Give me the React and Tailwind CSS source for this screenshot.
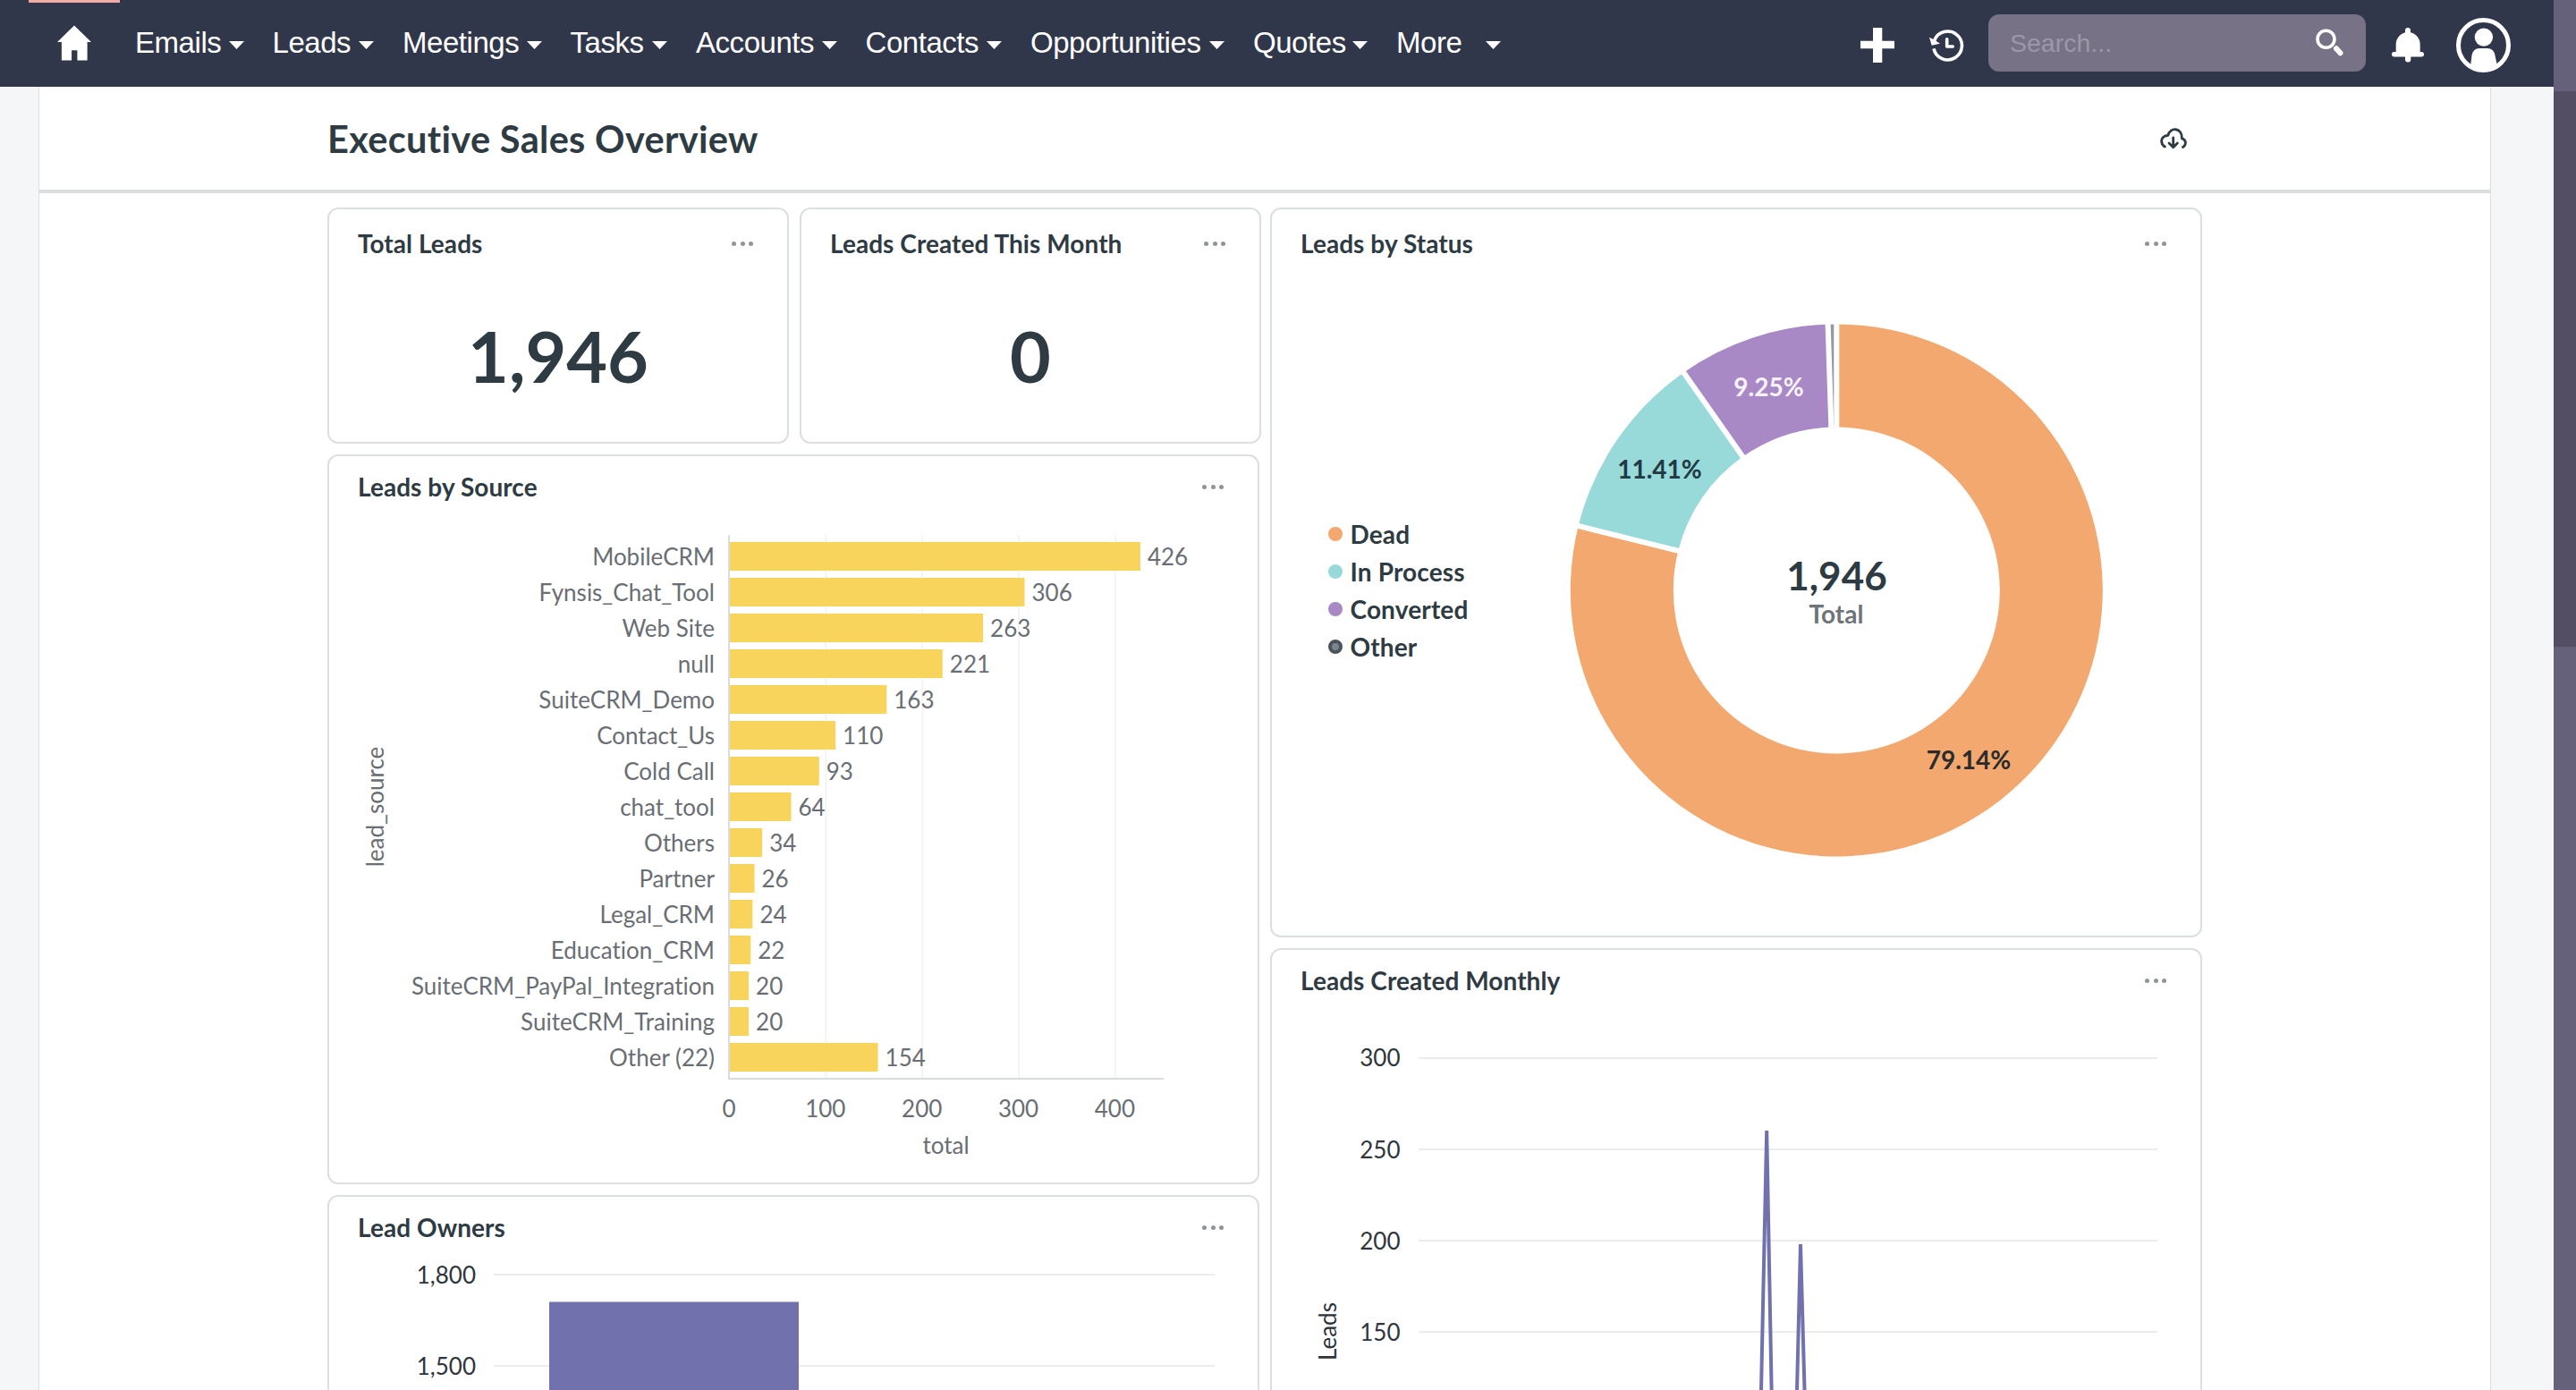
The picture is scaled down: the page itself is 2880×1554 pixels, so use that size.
import React from 'react';

const navItems = [
  { label: 'Emails', width: 'w-[104.5px]' },
  { label: 'Leads', width: 'w-[96.5px]' },
  { label: 'Meetings', width: 'w-[138.5px]' },
  { label: 'Tasks', width: 'w-[91.5px]' },
  { label: 'Accounts', width: 'w-[140.5px]' },
  { label: 'Contacts', width: 'w-[135.5px]' },
  { label: 'Opportunities', width: 'w-[200px]' },
  { label: 'Quotes', width: 'w-[111px]' },
  { label: 'More', width: 'w-[100px]' },
];

const sources = [
  { name: 'MobileCRM', total: 426 },
  { name: 'Fynsis_Chat_Tool', total: 306 },
  { name: 'Web Site', total: 263 },
  { name: 'null', total: 221 },
  { name: 'SuiteCRM_Demo', total: 163 },
  { name: 'Contact_Us', total: 110 },
  { name: 'Cold Call', total: 93 },
  { name: 'chat_tool', total: 64 },
  { name: 'Others', total: 34 },
  { name: 'Partner', total: 26 },
  { name: 'Legal_CRM', total: 24 },
  { name: 'Education_CRM', total: 22 },
  { name: 'SuiteCRM_PayPal_Integration', total: 20 },
  { name: 'SuiteCRM_Training', total: 20 },
  { name: 'Other (22)', total: 154 },
];

// angles in radians, clockwise from 12 o'clock
const slices = [
  { name: 'Dead', from: 0, to: 4.9567, color: '#f2a86f', label: '79.14%', x: 779, y: 550, ink: '#2b2b2b' },
  { name: 'In Process', from: 4.9567, to: 5.6713, color: '#98d9d9', label: '11.41%', x: 433.5, y: 225, ink: '#1f3a44' },
  { name: 'Converted', from: 5.6713, to: 6.2507, color: '#a989c5', label: '9.25%', x: 555.5, y: 133, ink: '#f7f2fb' },
  { name: 'Other', from: 6.2507, to: 6.2832, color: '#949aa0' },
];

const Caret = () => (
  <svg className="w-[17px] h-[9px] mt-1 shrink-0" viewBox="0 0 17 9" fill="#fff">
    <path d="M0 0h17L8.500 9z" />
  </svg>
);

const NavBar = () => (
  <header className="h-[97px] bg-[#31374a] flex items-center relative shrink-0">
    <span className="absolute left-8 top-0 w-[102px] h-[3px] bg-[#f5aaa5]" />
    <svg className="ml-16 w-[38px] h-[40px] -mt-0.5 shrink-0" viewBox="0 0 39 40" fill="#fff">
      <path d="M19.500 0L39 19h-4.500v21H23V28.500h-6.500V40H5V19H0z" />
    </svg>
    <nav className="ml-[49px] flex items-center gap-8 text-[33px] leading-[40px] tracking-[-0.45px] text-white">
      {navItems.map((item) => (
        <div key={item.label} className="flex items-center">
          <span className={`-mt-0.5 whitespace-nowrap ${item.width}`}>{item.label}</span>
          <Caret />
        </div>
      ))}
    </nav>
    <div className="ml-auto mr-12 flex items-center">
      <svg className="w-[38px] h-[39px] mt-1" viewBox="0 0 38 39" fill="#fff">
        <path d="M14 0h10.300v14.700H38v8.600H24.300V39H14V23.300H0v-8.600h14z" />
      </svg>
      <svg className="ml-[39px] w-[40px] h-[36px] mt-1" viewBox="0 0 40 36" fill="none" stroke="#fff" strokeWidth="3.600">
        <path d="M5.700 12.300A15.900 15.900 0 1 1 5 21.300" />
        <path d="M0 8.700L5.500 11.500L12 15.700L2.700 17.700z" fill="#fff" stroke="none" />
        <path d="M19.700 10.800V19h6.500" strokeLinecap="round" strokeLinejoin="round" />
      </svg>
      <div className="ml-[26px] w-[422px] h-16 -mt-px rounded-xl bg-[#777286] flex items-center justify-between px-6 text-[28.5px] text-[#9c98a8]">
        <span>Search...</span>
        <svg className="w-8 h-8" viewBox="0 0 32 32" fill="none" stroke="#fff">
          <circle cx="11.500" cy="11.800" r="9.500" strokeWidth="3.600" />
          <path d="M23 22.300l4.500 5" strokeWidth="6" strokeLinecap="round" />
        </svg>
      </div>
      <svg className="ml-[29px] w-9 h-[39px] mt-1" viewBox="0 0 36 39" fill="#fff">
        <rect x="15" y="0" width="6" height="9" rx="3" />
        <path d="M4.700 29V18.500a13.500 13.500 0 0 1 27 0V29z" />
        <rect x="0" y="27" width="36" height="5.500" rx="2.700" />
        <rect x="15" y="29" width="6.300" height="9.500" rx="3" />
      </svg>
      <svg className="ml-9 w-[61px] h-[61px] mt-1" viewBox="0 0 61 61">
        <circle cx="30.500" cy="30.500" r="28" fill="none" stroke="#fff" strokeWidth="5" />
        <circle cx="30.900" cy="21.600" r="10.200" fill="#fff" />
        <path d="M16 54L17.500 42Q19 34 26 34h9q7 0 8.500 8L46 54Q31 64 16 54z" fill="#fff" />
      </svg>
    </div>
  </header>
);

const Card = ({ title, className = '', headClass = 'h-[68px]', children }) => (
  <section className={`border-2 border-[#dcdfe0] rounded-xl bg-white flex flex-col overflow-hidden shrink-0 ${className}`}>
    <div className={`flex items-center justify-between pl-8 pr-[38px] shrink-0 ${headClass}`}>
      <h2 className="text-[28px] leading-[34px] tracking-[0.06px] font-bold">{title}</h2>
      <div className="flex gap-[4.5px]">
        <span className="w-[5px] h-[5px] rounded-full bg-[#8f9496]" />
        <span className="w-[5px] h-[5px] rounded-full bg-[#8f9496]" />
        <span className="w-[5px] h-[5px] rounded-full bg-[#8f9496]" />
      </div>
    </div>
    {children}
  </section>
);

const SourceChart = () => {
  const x0 = 447.5;
  const unit = 1.0784;
  return (
    <svg className="w-[1038px] h-[744px] text-[26px]" viewBox="0 0 1038 744" fill="#696e73">
      {[100, 200, 300, 400].map((t) => (
        <rect key={t} x={x0 + t * unit - 1} y="20" width="2" height="608" fill="#f3f4f4" />
      ))}
      {sources.map((s, i) => (
        <g key={s.name}>
          <rect x={x0} y={28 + i * 40} width={s.total * unit} height="32" fill="#f9d45c" />
          <text x="431" y={53.5 + i * 40} textAnchor="end">{s.name}</text>
          <text x={x0 + s.total * unit + 8} y={53.5 + i * 40}>{s.total}</text>
        </g>
      ))}
      <rect x={x0 - 1.5} y="20" width="2" height="609" fill="#d9dcdd" />
      <rect x={x0 - 1.5} y="627" width="487" height="2" fill="#d9dcdd" />
      {[0, 100, 200, 300, 400].map((t) => (
        <text key={t} x={x0 + t * unit - 0.5} y="670.500" textAnchor="middle">{t}</text>
      ))}
      <text x="689.500" y="712" textAnchor="middle">total</text>
      <text transform="translate(60.500 324) rotate(-90)" textAnchor="middle">lead_source</text>
    </svg>
  );
};

const OwnersChart = () => (
  <svg className="w-[1038px] h-[150px] text-[26px]" viewBox="0 0 1038 150" fill="#2e353b">
    <rect x="184" y="18" width="806" height="2" fill="#ebecec" />
    <rect x="184" y="120" width="806" height="2" fill="#ebecec" />
    <rect x="246" y="49.500" width="279" height="110" fill="#7172ad" />
    <text x="164" y="28.500" textAnchor="end">1,800</text>
    <text x="164" y="130.500" textAnchor="end">1,500</text>
  </svg>
);

const polar = (r, a) => `${631.3 + r * Math.sin(a)} ${350 - r * Math.cos(a)}`;

const arc = ({ from, to }) => {
  const big = to - from > Math.PI ? 1 : 0;
  return `M${polar(297.5, from)}A297.5 297.5 0 ${big} 1 ${polar(297.5, to)}L${polar(182.5, to)}A182.5 182.5 0 ${big} 0 ${polar(182.5, from)}Z`;
};

const StatusChart = () => (
  <svg className="w-[1038px] h-[736px] text-[28px] font-bold" viewBox="0 0 1038 736" fill="#2e3b43">
    {slices.map((s) => (
      <path key={s.name} d={arc(s)} fill={s.color} />
    ))}
    {/* gaps between slices */}
    {slices.map((s) => (
      <path key={s.name} d={`M${polar(180, s.from)}L${polar(300, s.from)}`} stroke="#fff" strokeWidth="6" />
    ))}
    {slices.filter((s) => s.label).map((s) => (
      <text key={s.name} x={s.x} y={s.y} textAnchor="middle" fill={s.ink}>{s.label}</text>
    ))}
    <text x="631.500" y="349.500" textAnchor="middle" className="text-[44px]">1,946</text>
    <text x="631" y="387" textAnchor="middle" fill="#6d7579">Total</text>
    {slices.map((s, i) => (
      <g key={s.name}>
        {s.label ? (
          <circle cx="71" cy={287 + i * 42} r="8" fill={s.color} />
        ) : (
          <circle cx="71" cy={287 + i * 42} r="6" fill="#7c858c" stroke="#4a545c" strokeWidth="4" />
        )}
        <text x="87.500" y={298 + i * 42} className="tracking-[0.15px]">{s.name}</text>
      </g>
    ))}
  </svg>
);

const MonthlyChart = () => (
  <svg className="w-[1038px] h-[424px] text-[26px]" viewBox="0 0 1038 424" fill="#2e353b">
    {[300, 250, 200, 150].map((t, i) => (
      <g key={t}>
        <rect x="164" y={52 + i * 102} width="826" height="2" fill="#ebecec" />
        <text x="143.500" y={62.3 + i * 102.3} textAnchor="end">{t}</text>
      </g>
    ))}
    <path d="M546.800 434L553.200 134L558.800 434M586.800 434L591 261L595.800 434" fill="none" stroke="#7172ad" strokeWidth="4" strokeLinejoin="bevel" />
    <text transform="translate(72 358.500) rotate(-90)" textAnchor="middle">Leads</text>
  </svg>
);

export default function App() {
  return (
    <div className="h-screen w-full flex overflow-hidden bg-[#f4f6f8] font-['Liberation_Sans',sans-serif]">
      <div className="flex-1 flex flex-col min-w-0">
        <NavBar />
        <main className="flex-1 min-h-0 ml-[43px] mr-[70px] overflow-hidden bg-white border-x border-[#dcdfe2] font-['Lato',sans-serif] text-[#2e3b43] [font-variant-ligatures:none]">
          <div className="h-[119px] border-b-4 border-[#dcdedd] flex items-center justify-between pl-[322px] pr-[339px]">
            <h1 className="text-[41.5px] leading-[48px] tracking-[0.32px] font-bold">Executive Sales Overview</h1>
            <svg className="w-[30px] h-[24px]" viewBox="0 0 30 24" fill="none" stroke="#2e3b43" strokeWidth="2.800" strokeLinecap="round" strokeLinejoin="round">
              <path d="M5.300 21C0 17.500 0 9 9 8.300C10.500-1 25-1 24.300 11.800C29.500 13 29.500 19 25.500 21.500" />
              <path d="M14.700 11v10.500M10 17l4.700 4.700 4.700-4.700" />
            </svg>
          </div>
          <div className="pt-4 pl-[322px] flex items-start gap-2.5">
            <div className="w-[1044px] flex flex-col gap-3">
              <div className="flex gap-3">
                <Card title="Total Leads" className="w-[516px] h-[264px]" headClass="h-[76px]">
                  <div className="pt-10 text-center text-[79px] leading-[96px] font-bold">1,946</div>
                </Card>
                <Card title="Leads Created This Month" className="w-[516px] h-[264px]" headClass="h-[76px]">
                  <div className="pt-10 text-center text-[79px] leading-[96px] font-bold">0</div>
                </Card>
              </div>
              <Card title="Leads by Source" className="w-[1042px] h-[816px]">
                <SourceChart />
              </Card>
              <Card title="Lead Owners" className="w-[1042px] h-[816px]">
                <OwnersChart />
              </Card>
            </div>
            <div className="w-[1042px] flex flex-col gap-3">
              <Card title="Leads by Status" className="h-[816px]" headClass="h-[76px]">
                <StatusChart />
              </Card>
              <Card title="Leads Created Monthly" className="h-[816px]">
                <MonthlyChart />
              </Card>
            </div>
          </div>
        </main>
      </div>
      {/* page scrollbar */}
      <div className="w-[25px] bg-[#66617a] pt-[102px]">
        <div className="h-[621px] bg-[#544e64]" />
      </div>
    </div>
  );
}
